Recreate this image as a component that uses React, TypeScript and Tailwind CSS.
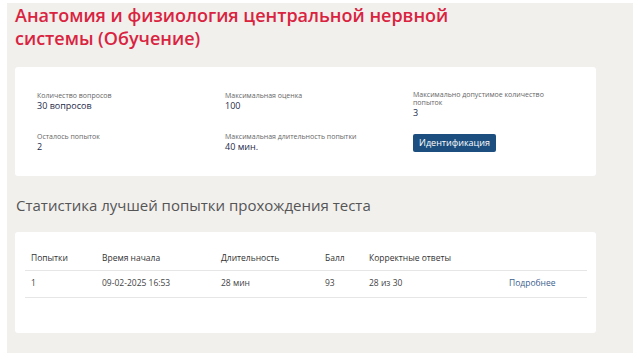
export default function App() {
  const font = { fontFamily: '"Open Sans", "Noto Sans", sans-serif' };
  return (
    <div className="min-h-screen bg-white pt-[3px] pl-[7px]" style={font}>
      <div className="min-h-[350px] bg-[#f1f0ed] pl-[8px] pb-6">
        {/* ---------------------- TITLE ---------------------- */}
        <h1 className="w-[460px] pt-[1px] text-[18px] leading-[23px] font-semibold text-[#d9233f]">
          Анатомия и физиология центральной нервной системы (Обучение)
        </h1>

        {/* ---------------------- INFO CARD ---------------------- */}
        <section className="mt-[17px] w-[581px] rounded-[3px] bg-white pl-[22px] pt-[24px] pb-[23px]">
          <div className="grid grid-cols-[188px_188px_140px] gap-y-[13px]">
            <div>
              <p className="text-[7px] leading-[9px] text-[#666]">Количество вопросов</p>
              <p className="text-[9px] leading-[12px] text-[#1e2a4a]">30 вопросов</p>
            </div>
            <div>
              <p className="text-[7px] leading-[9px] text-[#666]">Максимальная оценка</p>
              <p className="text-[9px] leading-[12px] text-[#1e2a4a]">100</p>
            </div>
            <div>
              <p className="text-[7px] leading-[8px] text-[#666]">
                Максимально допустимое количество попыток
              </p>
              <p className="text-[9px] leading-[12px] text-[#1e2a4a]">3</p>
            </div>

            <div>
              <p className="text-[7px] leading-[9px] text-[#666]">Осталось попыток</p>
              <p className="text-[9px] leading-[12px] text-[#1e2a4a]">2</p>
            </div>
            <div>
              <p className="text-[7px] leading-[9px] text-[#666]">
                Максимальная длительность попытки
              </p>
              <p className="text-[9px] leading-[12px] text-[#1e2a4a]">40 мин.</p>
            </div>
            <div className="-mt-[4px]">
              <button className="h-[18px] w-[83px] rounded-[2px] bg-[#1c4f80] text-[9px] text-white">
                Идентификация
              </button>
            </div>
          </div>
        </section>

        {/* ---------------------- STATS ---------------------- */}
        <h2 className="mt-[18px] ml-[1px] text-[15px] leading-[22px] text-[#555]">
          Статистика лучшей попытки прохождения теста
        </h2>

        <section className="mt-[16px] w-[581px] rounded-[3px] bg-white pl-[10px] pr-[9px] pt-[15px] pb-[35px]">
          <table className="w-full table-fixed border-collapse text-[8.5px] text-left">
            <colgroup>
              <col className="w-[71px]" />
              <col className="w-[119px]" />
              <col className="w-[104px]" />
              <col className="w-[44px]" />
              <col className="w-[140px]" />
              <col />
            </colgroup>
            <thead>
              <tr className="h-[23px] border-b border-[#e6e6e6] text-[#333]">
                <th className="pl-[6px] font-normal">Попытки</th>
                <th className="pl-[6px] font-normal">Время начала</th>
                <th className="pl-[6px] font-normal">Длительность</th>
                <th className="pl-[6px] font-normal">Балл</th>
                <th className="pl-[6px] font-normal">Корректные ответы</th>
                <th className="pl-[6px] font-normal"></th>
              </tr>
            </thead>
            <tbody>
              <tr className="h-[27px] border-b border-[#e6e6e6] text-[#444]">
                <td className="pl-[6px]">1</td>
                <td className="pl-[6px]">09-02-2025 16:53</td>
                <td className="pl-[6px]">28 мин</td>
                <td className="pl-[6px]">93</td>
                <td className="pl-[6px]">28 из 30</td>
                <td className="pl-[6px]">
                  <a href="#" className="text-[#3b5f8e]">
                    Подробнее
                  </a>
                </td>
              </tr>
            </tbody>
          </table>
        </section>
      </div>
    </div>
  );
}
